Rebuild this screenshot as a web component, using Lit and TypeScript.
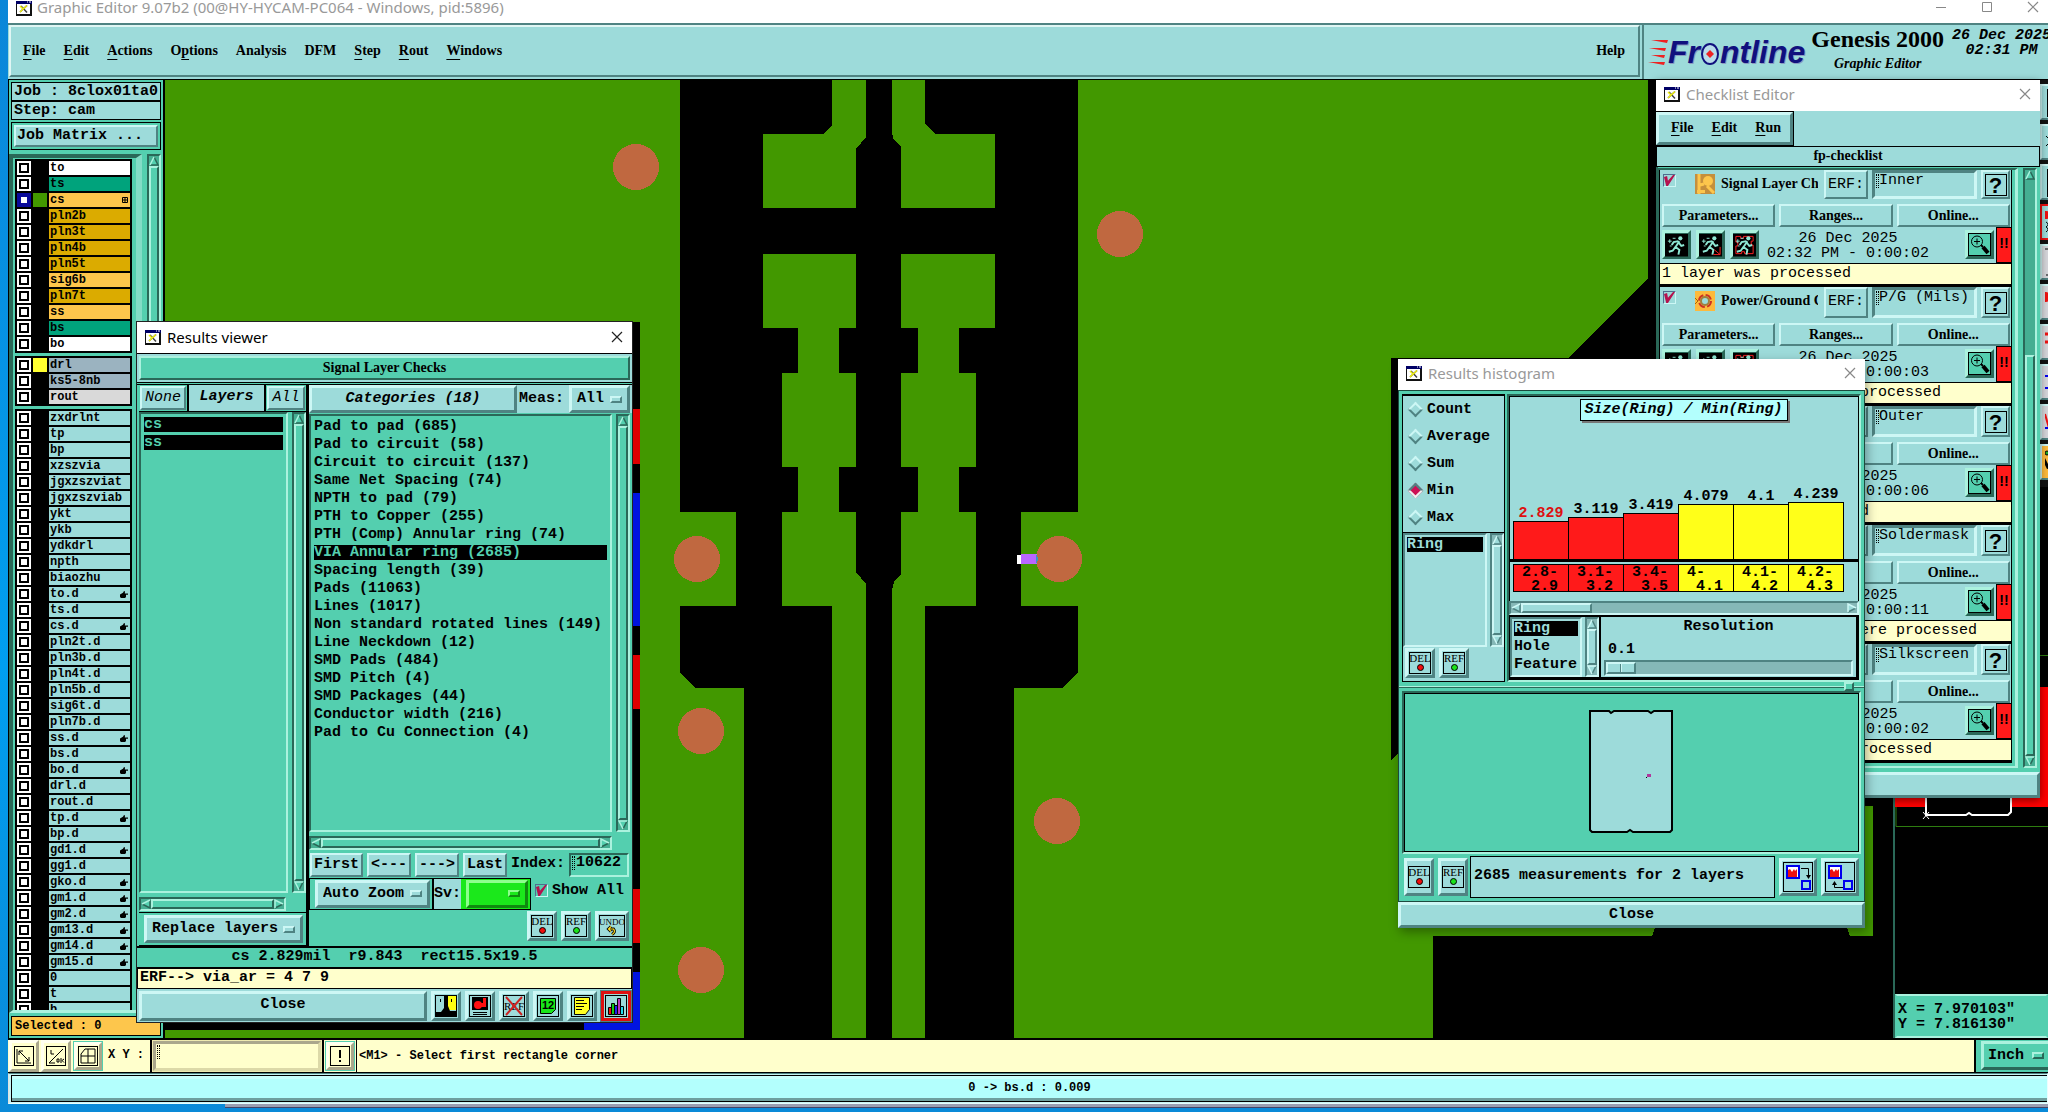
import { LitElement, html, css, svg, nothing } from "lit";
import { customElement } from "lit/decorators.js";
import { classMap } from "lit/directives/class-map.js";
import { styleMap } from "lit/directives/style-map.js";

/* ---------- shared look ---------- */
const base = css`
  *, *::before, *::after { box-sizing: border-box; }
  :host {
    box-sizing: border-box;
    --f: #9ddbda; --l: #cdf7f5; --d: #4f8382; --t: #85b8b7;
    --mono: "Liberation Mono", "Courier New", monospace;
    --serif: "Liberation Serif", "Times New Roman", serif;
    --ui: "Noto Sans", "Open Sans", sans-serif;
    font: bold 15px/18px var(--mono);
    color: #000;
  }
  .cyan { --f: #9ddbda; --l: #cdf7f5; --d: #4f8382; --t: #85b8b7; }
  .teal { --f: #54cfaf; --l: #abf2de; --d: #2a6858; --t: #45ae92; }
  .row { display: flex; }
  .col { display: flex; flex-direction: column; }
  .grow { flex: 1; min-width: 0; min-height: 0; }
  .up { border: 3px solid; border-color: var(--l) var(--d) var(--d) var(--l); background: var(--f); }
  .sunk { border: 3px solid; border-color: var(--d) var(--l) var(--l) var(--d); background: var(--f); }
  .thin { border-width: 2px; }
  button { font: inherit; color: inherit; padding: 0; margin: 0; white-space: nowrap; }
  input, select { font: inherit; color: inherit; margin: 0; padding: 0; border: 0; background: none; appearance: none; min-width: 0; border-radius: 0; outline: 0; }
  ul { list-style: none; margin: 0; padding: 0; }
  svg { display: block; }
  .serif { font: bold 14px/18px var(--serif); }
  .icon { display: flex; align-items: center; justify-content: center; flex: none; }
  .field { display: flex; align-items: flex-start; }
  .field input { flex: 1; width: 0; line-height: 16px; height: 16px; }
  .caret { width: 3px; height: 14px; margin: 1px 1px 0 1px; border-right: 1px dotted #000; border-left: 1px dotted #000; flex: none; }
  .opt { display: flex; align-items: center; }
  .opt select { flex: 1; }
  .notch { width: 12px; height: 7px; flex: none; border: 2px solid; border-color: var(--l) var(--d) var(--d) var(--l); background: var(--f); }
  .tick { width: 13px; height: 13px; flex: none; border: 1px solid; border-color: #4f6f8f #cdf7f5 #cdf7f5 #4f6f8f; background: var(--f); }
  .tick:checked::before { content: ""; display: block; width: 11px; height: 11px; background: #b5124e; clip-path: polygon(0 18%, 28% 10%, 36% 52%, 82% 0, 100% 0, 36% 100%, 20% 100%); }
  .vs, .hs { display: flex; flex: none; border: 2px solid; border-color: var(--d) var(--l) var(--l) var(--d); background: var(--t); }
  .vs { width: 14px; flex-direction: column; align-self: stretch; }
  .hs { height: 14px; }
  .thumb { border: 2px solid; border-color: var(--l) var(--d) var(--d) var(--l); background: var(--f); flex: 1; }
  .title { display: flex; align-items: center; gap: 6px; height: 31px; flex: none; background: #fff; padding: 0 9px 2px 8px; font: 15px/20px var(--ui); color: #999; }
  .title .x { margin-left: auto; border: 0; background: none; width: 12px; height: 12px; }
`;

const appIcon = html`<svg width="16" height="16" viewBox="0 0 16 16" aria-hidden="true">
  <rect x="0" y="1" width="16" height="15" fill="#111"/><rect x="1" y="4" width="13" height="10" fill="#fff"/>
  <rect x="0" y="1" width="16" height="3" fill="#006"/><path d="M11 2h1M13 2h2" stroke="#fff"/>
  <path d="M4 12L11 5.5M5 6l6 6.500" stroke="#444" stroke-width="1.500"/><path d="M4 12L11 5.500M4 6l3 3" stroke="#ee1" stroke-width="1.500"/></svg>`;
const cross = (c = "#888") => html`<svg width="12" height="12" viewBox="0 0 12 12"><path d="M1 1l10 10M11 1L1 11" stroke=${c} stroke-width="1.200" fill="none"/></svg>`;

type Dir = "u" | "d" | "l" | "r";
const TRI: Record<Dir, [string, string]> = {
  u: ["M5 1L1 9", "M5 1L9 9H1"], d: ["M9 1H1L5 9", "M9 1L5 9"],
  l: ["M9 1L1 5", "M1 5L9 9V1"], r: ["M1 9V1L9 5", "M9 5L1 9"],
};
const arrow = (d: Dir) => html`<svg width="10" height="10" viewBox="0 0 10 10" style="flex:none">
  <path d="M${d === "u" ? "5 1L9 9H1z" : d === "d" ? "1 1H9L5 9z" : d === "l" ? "9 1V9L1 5z" : "1 1V9L9 5z"}" fill="var(--f)"/>
  <path d=${TRI[d][1]} fill="none" stroke="var(--d)" stroke-width="1.500"/>
  <path d=${TRI[d][0]} fill="none" stroke="var(--l)" stroke-width="1.500"/></svg>`;
const vscroll = (from = 0, size = 1, rest = 0) => html`<div class="vs">${arrow("u")}
  <div style=${styleMap({ flex: String(from) })}></div><div class="thumb" style=${styleMap({ flex: String(size) })}></div>
  <div style=${styleMap({ flex: String(rest) })}></div>${arrow("d")}</div>`;
const hscroll = (size = 1, rest = 0) => html`<div class="hs">${arrow("l")}
  <div class="thumb" style=${styleMap({ flex: String(size) })}></div>
  <div style=${styleMap({ flex: String(rest) })}></div>${arrow("r")}</div>`;

/* small "DEL" / "REF" style picture: framed caption over a mark */
const tag = (t: string, mark: unknown, w = 22) => html`<svg width=${w} height="22" viewBox="0 0 ${w} 22">
  <rect x="0.500" y="0.500" width=${w - 1} height="21" fill="none" stroke="#000"/>
  <text x=${w / 2} y="9.500" text-anchor="middle" font-family="Liberation Serif, serif" font-weight="400" font-size=${t.length > 3 ? 9 : 11}>${t}</text>${mark}</svg>`;
const dot = (c: string) => svg`<circle cx="11.500" cy="15.500" r="3" fill=${c} stroke="#000"/>`;
const delIcon = tag("DEL", dot("#f00d0d"));
const refIcon = tag("REF", dot("#1be31b"));
const undoIcon = tag("UNDO", svg`<path d="M10 14h4.500q2.500 3-1.500 5.500M12 11.500l-2.500 2.500 2.500 2.500" fill="none" stroke="#000" stroke-width="3"/><path d="M10 14h4.500q2.500 3-1.500 5.500M12 11.500l-2.500 2.500 2.500 2.500" fill="none" stroke="#fd2" stroke-width="1.200"/>`, 26);

/* ---------- layer list ---------- */
interface Layer { n: string; c: string; fill?: string; work?: boolean; pin?: boolean; }
const CY = "#9ddbda";
const L = (names: string, c = CY): Layer[] => names.split(" ").map((s) => ({ n: s.replace("*", ""), c, pin: s.endsWith("*") }));
const GROUPS: Layer[][] = [
  [...L("to", "#fff"), ...L("ts", "#00a37c"), { n: "cs", c: "#fdc64c", fill: "#429800", work: true },
    ...L("pln2b pln3t pln4b pln5t", "#dbab00"), ...L("sig6b", "#fdc64c"), ...L("pln7t", "#dbab00"),
    ...L("ss", "#fdc64c"), ...L("bs", "#00a37c"), ...L("bo", "#fff")],
  [{ n: "drl", c: "#9bb3c0", fill: "#ffff30" }, ...L("ks5-8nb", "#9bb3c0"), ...L("rout", "#d9d9d9")],
  L("zxdrlnt tp bp xzszvia jgxzszviat jgxzszviab ykt ykb ydkdrl npth biaozhu to.d* ts.d cs.d* pln2t.d pln3b.d pln4t.d pln5b.d sig6t.d pln7b.d ss.d* bs.d bo.d* drl.d rout.d tp.d* bp.d gd1.d* gg1.d gko.d* gm1.d* gm2.d* gm13.d* gm14.d* gm15.d* 0 t b"),
];

@customElement("layer-panel")
class LayerPanel extends LitElement {
  static styles = [base, css`
    :host { display: flex; flex-direction: column; width: 157px; flex: none; background: #54cfaf; border: 2px solid #000; border-width: 0 2px 0 1px; padding: 2px; }
    .job { border: 1px solid #000; background: #9ddbda; height: 19px; padding-left: 2px; white-space: nowrap; flex: none; }
    .matrix { border: 1px solid #000; padding: 2px; margin-top: 2px; display: flex; flex: none; }
    .matrix button { flex: 1; text-align: left; padding: 0 0 2px 1px; height: 22px; }
    .mid { margin: 4px 0 3px -2px; flex: 1; min-height: 0; display: flex; gap: 5px; overflow: hidden; }
    .frame { width: 133px; overflow: hidden; border: 6px solid; border-width: 4px 6px 3px 4px; border-color: #2a6858 #83dcc6 #abf2de #2a6858; padding: 1px 4px 0 2px; display: flex; flex-direction: column; gap: 3px; }
    .group { background: #000; padding: 2px; display: flex; flex-direction: column; gap: 2px; width: 117px; flex: none; }
    .layer { display: grid; grid-template-columns: 14px 14px 1fr; gap: 2px; height: 14px; font: bold 12px/14px var(--mono); }
    .box { width: 14px; height: 14px; border: 2px solid #fff; background: #fff; outline: 2px solid #000; outline-offset: -4px; }
    .box:checked { border: 4px solid #0a0a9a; outline: 0; }
    label { display: flex; justify-content: space-between; align-items: center; padding: 0 2px 0 1px; overflow: hidden; white-space: nowrap; }
    .sel { border: 1px solid #000; background: #fdc64c; height: 20px; padding-left: 3px; font-size: 12px; flex: none; }
  `];
  render() {
    return html`
      <div class="job">Job : 8clox01ta0</div>
      <div class="job">Step: cam</div>
      <div class="matrix"><button class="up thin">Job Matrix ...</button></div>
      <div class="mid teal">
        <div class="frame">${GROUPS.map((g, gi) => html`<div class="group">${g.map((l, i) => html`<div class="layer">
          <input class="box" type="checkbox" id="l${gi}-${i}" .checked=${!!l.work}>
          <span style=${styleMap({ background: l.fill ?? "#000" })}></span>
          <label for="l${gi}-${i}" style=${styleMap({ background: l.c })}>${l.n}${l.work
            ? html`<svg width="6" height="6" viewBox="0 0 6 6"><path d="M.5.500h5v5h-5zM3 0v6M0 3h6" fill="none" stroke="#000"/></svg>`
            : l.pin ? html`<svg width="8" height="7" viewBox="0 0 8 7"><path d="M0 3.500L3 1.800 4 0 5 .5 4.800 2.500H8v1.200H6V6L5 7H1L0 6z"/></svg>` : nothing}</label>
        </div>`)}</div>`)}</div>
        ${vscroll()}
      </div>
      <div class="sel">Selected : 0</div>`;
  }
}

/* ---------- board drawing ---------- */
@customElement("board-canvas")
class BoardCanvas extends LitElement {
  static styles = css`
    :host { display: block; background: #000; overflow: hidden; }
    svg { display: block; width: 100%; height: 100%; }
  `;
  render() {
    const pads = [[636, 167], [1120, 234], [697, 559], [1059, 559], [701, 731], [1057, 821], [701, 970]];
    return html`<svg viewBox="165 80 1728 958" preserveAspectRatio="xMinYMin slice" shape-rendering="crispEdges">
      <g fill="#429800">
        <path d="M165 80H680V512H736V606H680V672L695 688H744V1038H165z"/>
        <path d="M1078 80H1648V278L1568 358H1391V760L1398 753H1865V806H1873V936H1850L1847 928H1655L1652 936H1433V1038H1014V688H1062L1078 672V606H1021V512H1078z"/>
        <path d="M832 80H866V137L856 149V208H763V134H823L832 125z"/>
        <path d="M763 254H856V328H839V373H856V467H839V512H856V572L866 584V1038H832V606H782V512H798V467H782V373H798V328H763z"/>
        <path d="M892 80H925V124L935 134H995V208H901V147L893 138 892 131z"/>
        <path d="M901 254H995V328H959V373H976V467H959V512H976V606H925V1038H892V590L894 582 901 574V512H918V467H901V373H918V328H901z"/>
      </g>
      ${pads.map(([x, y]) => svg`<circle cx=${x} cy=${y} r="23" fill="#c06840"/>`)}
      <rect x="1017" y="555" width="4" height="9" fill="#fff"/>
      <rect x="1021" y="554" width="16" height="10" fill="#b966ff"/>
      <path d="M1036 554q4 5 0 10z" fill="#3a94c4"/>
      <path d="M165 322H640V1030H165z" fill="#000"/>
      <path d="M632 409h8v55h-8zM632 655h8v54h-8zM632 889h8v54h-8z" fill="#de0000"/>
      <path d="M632 493h8v133h-8zM632 972h8v58H584v-8h48z" fill="#0014e0"/>
    </svg>`;
  }
}

/* ---------- results viewer ---------- */
const CATS = ["Pad to pad (685)", "Pad to circuit (58)", "Circuit to circuit (137)", "Same Net Spacing (74)", "NPTH to pad (79)",
  "PTH to Copper (255)", "PTH (Comp) Annular ring (74)", "VIA Annular ring (2685)", "Spacing length (39)", "Pads (11063)",
  "Lines (1017)", "Non standard rotated lines (149)", "Line Neckdown (12)", "SMD Pads (484)", "SMD Pitch (4)",
  "SMD Packages (44)", "Conductor width (216)", "Pad to Cu Connection (4)"];
const frame = (body: unknown, fill = "none") => html`<svg width="22" height="22" viewBox="0 0 22 22"><rect x="0.500" y="0.500" width="21" height="21" fill=${fill} stroke="#000"/>${body}</svg>`;
const VIEW_ICONS = [
  frame(svg`<path d="M12 1h9v14h-9z" fill="#ff1"/><path d="M9 1h4v10l2 5h6v5H1v-4h5l3-4zM5 4h1v3H5zM16 4h1v3h-1z"/>`, "#9ddbda"),
  frame(svg`<path d="M3 2h16v13H3z"/><circle cx="9" cy="10" r="4" fill="#f11"/><path d="M14 3h3v9h-5V8h2z" fill="#f11"/><path d="M4 17.500h14M4 19.500h14" stroke="#000"/>`),
  frame(svg`<text x="11" y="15" text-anchor="middle" font-family="Liberation Serif, serif" font-size="11" font-weight="400">REF</text><path d="M3 2l16 18M19 2L3 20" stroke="#c22" stroke-width="2"/>`),
  frame(svg`<path d="M3.500 3.500h15v11l-4 4h-11z" fill="#19e619" stroke="#000"/><text x="11" y="14" text-anchor="middle" font-family="Liberation Sans, sans-serif" font-size="11" font-weight="700">12</text>`),
  frame(svg`<path d="M3.500 2.500h15v12l-4 5h-11z" fill="#ff2" stroke="#000"/><path d="M5 5.500h8M5 8.500h11M5 11.500h8M5 14.500h6" stroke="#000"/>`),
  frame(svg`<path d="M3.500 12.500h3v7h-3z" fill="#e11" stroke="#000"/><path d="M6.500 8.500h3v11h-3z" fill="#1c1" stroke="#000"/><path d="M9.500 10.500h3v9h-3z" fill="#22e" stroke="#000"/><path d="M12.500 3.500h3v16h-3z" fill="#b3b" stroke="#000"/><path d="M15.500 11.500h3v8h-3z" fill="#2de" stroke="#000"/>`),
];

@customElement("results-viewer")
class ResultsViewer extends LitElement {
  static styles = [base, css`
    :host { display: flex; flex-direction: column; width: 495px; background: #54cfaf; outline: 1px solid #222; }
    .title { color: #000; }
    .head { border: 2px solid #9ddbda; margin-top: 1px; height: 28px; flex: none; outline: 1px solid #000; }
    .head div { height: 24px; line-height: 19px; text-align: center; }
    .panes { display: flex; margin-top: 2px; border-top: 1px solid #000; height: 562px; flex: none; }
    .left { width: 172px; border-right: 3px solid #000; padding-left: 2px; }
    .right { flex: 1; min-width: 0; }
    .lhead { height: 27px; border-bottom: 1px solid #000; flex: none; font-style: italic; }
    .lhead button { width: 46px; margin: 1px; font-weight: 400; font-style: italic; }
    .lhead button:last-child { width: 38px; }
    .lhead span { flex: 1; text-align: center; background: #9ddbda; border: 2px solid #000; border-width: 0 2px; line-height: 24px; }
    .list { padding: 3px; border-width: 2px; flex: 1; min-width: 0; }
    .list li { height: 15px; line-height: 15px; margin-bottom: 3px; white-space: nowrap; }
    .list .on { background: #000; color: #54cfaf; }
    .lists { display: flex; gap: 4px; }
    .right .lists { padding-right: 2px; margin-top: 1px; }
    .hs { margin: 4px 20px 3px 0; }
    .left .hs { margin-bottom: 1px; }
    .rep { border: 1px solid #000; border-width: 1px 0; padding: 2px 3px 2px 5px; height: 34px; flex: none; }
    .opt { padding: 0 5px; height: 28px; }
    .cats { background: #9ddbda; padding-right: 2px; height: 28px; flex: none; }
    .cats button { width: 208px; font-style: italic; flex: none; }
    .cats label { padding: 0 5px 0 2px; line-height: 28px; }
    .nav { gap: 4px; height: 24px; padding: 0 3px 0 1px; align-items: stretch; flex: none; }
    .nav button { padding: 0 2px; width: 44px; flex: none; }
    .nav button:first-child { width: 53px; }
    .nav label { line-height: 22px; flex: none; }
    .zoom { height: 33px; align-items: center; flex: none; }
    .zoom > div { height: 32px; border: 1px solid #000; background: #9ddbda; display: flex; align-items: center; }
    .zoom .az { width: 124px; padding: 0 2px 0 5px; background: #54cfaf; }
    .zoom .sv { width: 98px; }
    .zoom .gr { --f: #1be81b; --l: #8dff8d; --d: #108a10; background: #1be81b; flex: 1; height: 30px; padding: 1px 2px 1px 5px; }
    .gr .opt { justify-content: flex-end; }
    .zoom .tick { margin: 0 4px 6px 4px; }
    .zoom > label { margin-bottom: 6px; }
    .tools { justify-content: flex-end; gap: 4px; padding: 1px 3px 0 0; height: 36px; flex: none; }
    .tools button { width: 30px; height: 30px; }
    .tools button:last-child { width: 34px; }
    .stat { height: 21px; border-top: 2px solid #000; text-align: center; white-space: pre; flex: none; }
    .erf { height: 22px; border: 1px solid #000; border-top-width: 2px; background: #ffffcc; padding-left: 2px; flex: none; }
    .foot { background: #9ddbda; flex: 1; gap: 4px; padding: 2px 1px 2px 2px; }
    .foot button { width: 30px; }
    .foot button:first-child { flex: 1; line-height: 22px; padding-bottom: 2px; }
    .foot button:last-child { border-color: #de1010; background: #9ddbda; outline: 1px solid #4f8382; }
  `];
  render() {
    return html`
      <div class="title">${appIcon}<span>Results viewer</span><button class="x" aria-label="Close window">${cross("#222")}</button></div>
      <div class="head teal serif"><div class="up thin">Signal Layer Checks</div></div>
      <div class="panes">
        <div class="left col teal">
          <div class="row lhead"><button class="up cyan thin">None</button><span>Layers</span><button class="up cyan thin">All</button></div>
          <div class="lists grow"><ul class="list sunk"><li class="on">cs</li><li class="on">ss</li></ul>${vscroll()}</div>
          ${hscroll()}
          <div class="rep"><div class="opt up cyan"><select aria-label="Layer mode"><option>Replace layers</option></select><i class="notch"></i></div></div>
        </div>
        <div class="right col teal">
          <div class="row cats cyan"><button class="up">Categories (18)</button><label for="meas">Meas:</label>
            <div class="opt up grow"><select id="meas"><option>All</option></select><i class="notch"></i></div></div>
          <div class="lists grow"><ul class="list sunk">${CATS.map((c, i) => html`<li class=${classMap({ on: i === 7 })}>${c}</li>`)}</ul>${vscroll()}</div>
          ${hscroll()}
          <div class="row nav"><button class="up cyan thin">First</button><button class="up cyan thin">&lt;---</button><button class="up cyan thin">---&gt;</button><button class="up cyan thin">Last</button>
            <label for="idx">Index:</label><div class="field sunk thin grow"><i class="caret"></i><input id="idx" value="10622"></div></div>
          <div class="row zoom">
            <div class="az"><div class="opt up cyan grow"><select aria-label="Zoom mode"><option>Auto Zoom</option></select><i class="notch"></i></div></div>
            <div class="sv"><label for="sv">Sv:</label><div class="gr"><div class="opt up"><select id="sv"><option></option></select><i class="notch"></i></div></div></div>
            <input class="tick" type="checkbox" id="all" checked><label for="all">Show All</label>
          </div>
          <div class="row tools cyan"><button class="up icon" aria-label="Delete">${delIcon}</button><button class="up icon" aria-label="Refresh">${refIcon}</button><button class="up icon" aria-label="Undo">${undoIcon}</button></div>
        </div>
      </div>
      <div class="stat">cs 2.829mil  r9.843  rect15.5x19.5</div>
      <div class="erf">ERF--&gt; via_ar = 4 7 9</div>
      <div class="row foot"><button class="up">Close</button>${VIEW_ICONS.map((i, n) => html`<button class="up icon" aria-label="Tool ${n + 1}">${i}</button>`)}</div>`;
  }
}

/* ---------- histogram ---------- */
const BARS: [string, string, string, number, string][] = [
  ["2.829", "2.8-", "2.9", 38, "#ff1a1a"], ["3.119", "3.1-", "3.2", 42, "#ff1a1a"], ["3.419", "3.4-", "3.5", 46, "#ff1a1a"],
  ["4.079", "4-", "4.1", 55, "#ffff19"], ["4.1", "4.1-", "4.2", 55, "#ffff19"], ["4.239", "4.2-", "4.3", 57, "#ffff19"]];

@customElement("results-histogram")
class ResultsHistogram extends LitElement {
  static styles = [base, css`
    :host { display: flex; flex-direction: column; width: 467px; background: #9ddbda; box-shadow: 2px 4px 10px rgba(0,0,0,.35); }
    .title { padding-bottom: 4px; }
    .body { background: #54cfaf; border: 1px solid #1d4a3e; padding: 3px; display: flex; flex-direction: column; height: 512px; flex: none; }
    .top { gap: 2px; height: 288px; flex: none; }
    .side { width: 103px; border: 1px solid #000; border-top-width: 2px; background: #9ddbda; flex: none; }
    .radios { height: 137px; border-bottom: 1px solid #000; padding: 0 0 2px 7px; flex: none; }
    .radios label { display: flex; align-items: center; gap: 6px; height: 27px; }
    .radios input { width: 11px; height: 11px; transform: rotate(45deg); border: 2px solid; border-color: #cdf7f5 #4f8382 #4f8382 #cdf7f5; }
    .radios input:checked { background: #cc0f55; border-color: #4f8382 #eee #eee #4f8382; }
    .list { flex: 1; padding: 2px; min-width: 0; border-width: 2px; overflow: hidden; }
    .list li { height: 15px; line-height: 15px; margin-bottom: 3px; white-space: nowrap; }
    .on { background: #000; color: #9ddbda; }
    .lists { height: 114px; gap: 3px; flex: none; }
    .btns { gap: 4px; padding: 1px 2px; }
    .btns button { width: 30px; height: 30px; }
    .main { border: 2px solid; border-color: #2a6858 #abf2de #abf2de #2a6858; background: #9ddbda; }
    .chart { display: flex; flex-direction: column; align-items: center; height: 205px; border: 1px solid #000; border-bottom: 0; flex: none; }
    .cap { margin-top: 2px; padding: 1px 4px 0 3px; height: 22px; border: 1px solid #000; background: #b3fffd; box-shadow: 2px 2px 0 #777; font-style: italic; }
    .bars { flex: 1; width: 100%; display: flex; align-items: flex-end; padding: 0 15px 0 3px; border-bottom: 3px solid #000; }
    .bar { flex: 1; text-align: center; margin-right: -1px; }
    .bar span { display: block; line-height: 15px; }
    .bar div { border: 1px solid #000; border-bottom: 0; }
    .bar:first-child span { color: #d11; }
    .bins { width: 100%; display: flex; padding: 2px 15px 9px 3px; height: 39px; flex: none; }
    .bin { flex: 1; border: 1px solid #000; margin-right: -1px; line-height: 14px; overflow: hidden; padding: 1px 0 0 8px; white-space: pre; }
    .low { flex: 1; border: 1px solid #000; border-width: 2px 3px 3px 1px; }
    .pick { width: 91px; gap: 3px; border-right: 2px solid #000; flex: none; }
    .res { text-align: center; padding: 1px 3px; }
    .res output { text-align: left; padding-left: 4px; margin-top: 5px; }
    input[type=range] { height: 16px; margin-top: auto; width: 100%; border: 2px solid; border-color: #4f8382 #cdf7f5 #cdf7f5 #4f8382; background: #85b8b7; }
    input[type=range]::-webkit-slider-thumb { appearance: none; width: 30px; height: 12px; border: 2px solid; border-color: #cdf7f5 #4f8382 #4f8382 #cdf7f5; background: linear-gradient(90deg, #9ddbda 12px, #4f8382 12px 13px, #cdf7f5 13px 14px, #9ddbda 14px); }
    .sash { height: 9px; display: flex; align-items: center; justify-content: flex-end; margin: 0 -3px; padding-right: 10px; background: linear-gradient(#54cfaf 4px, #abf2de 4px 5px, #2a6858 5px 6px, #54cfaf 6px); flex: none; }
    .sash i { width: 10px; height: 9px; }
    .map { flex: 1; padding: 0; }
    .map > div { border: 1px solid #000; height: 100%; display: flex; justify-content: center; align-items: center; padding: 0 2px 2px 0; }
    .info { gap: 4px; height: 44px; align-items: center; padding: 2px 2px 0 2px; flex: none; }
    .info button { width: 30px; height: 38px; }
    .info button.big { width: 38px; }
    .info p { flex: 1; margin: 0 0 0 -2px; height: 42px; border: 1px solid #000; background: #9ddbda; line-height: 38px; padding-left: 3px; }
    .close { height: 26px; }
  `];
  private swap(out: boolean) {
    return html`<svg width="30" height="30" viewBox="0 0 30 30"><rect x=".5" y=".5" width="29" height="29" fill="none" stroke="#000"/>
      <rect x="4" y="4" width="12" height="12" fill="#fff" stroke="#00e" stroke-width="2"/><path d="M5 8l2-1 2 3 2-3 1 2 2-2v8H5z" fill="#e11"/>
      <rect x="19" y="19" width="8" height="8" fill="none" stroke="#00e" stroke-width="2"/>
      ${out ? svg`<path d="M18 6.500h7.500v8" fill="none" stroke="#000"/><path d="M23 13h5l-2.500 4z"/>`
        : svg`<path d="M18 25.500H9.500V22" fill="none" stroke="#000"/><path d="M7 23h5l-2.500-4z"/>`}</svg>`;
  }
  render() {
    return html`
      <div class="title">${appIcon}<span>Results histogram</span><button class="x" aria-label="Close window">${cross()}</button></div>
      <div class="body">
        <div class="row top">
          <div class="side col">
            <div class="radios">${["Count", "Average", "Sum", "Min", "Max"].map((r) => html`<label><input type="radio" name="fn" .checked=${r === "Min"}>${r}</label>`)}</div>
            <div class="row lists"><ul class="list sunk"><li class="on">Ring</li></ul>${vscroll()}</div>
            <div class="row btns"><button class="up icon" aria-label="Delete">${delIcon}</button><button class="up icon" aria-label="Refresh">${refIcon}</button></div>
          </div>
          <div class="main col grow">
            <div class="chart"><div class="cap">Size(Ring) / Min(Ring)</div>
              <div class="bars">${BARS.map((b) => html`<div class="bar"><span>${b[0]}</span><div style=${styleMap({ height: b[3] + "px", background: b[4] })}></div></div>`)}</div>
              <div class="bins">${BARS.map((b) => html`<div class="bin" style=${styleMap({ background: b[4] })}>${b[1] + "\n " + b[2]}</div>`)}</div>
            </div>
            ${hscroll(68, 258)}
            <div class="row low grow">
              <div class="row pick"><ul class="list sunk"><li class="on">Ring</li><li>Hole</li><li>Feature</li></ul>${vscroll()}</div>
              <div class="col res grow"><label for="res">Resolution</label><output>0.1</output><input id="res" type="range" value="0"></div>
            </div>
          </div>
        </div>
        <div class="sash teal"><i class="up thin"></i></div>
        <div class="map sunk teal thin"><div>
          <svg width="84" height="124" viewBox="0 0 84 124"><path d="M1 1H20L22 3 25 1H59L62 3 65 1H83V120L81 122H44L41 120 38 122H3L1 120z" fill="#9ddbda" stroke="#000" stroke-width="2"/><path d="M58 64h4v3h-4z" fill="#b0369c"/><path d="M57 67h1v1h-1z"/></svg></div></div>
        <div class="row info"><button class="up icon" aria-label="Delete">${delIcon}</button><button class="up icon" aria-label="Refresh">${refIcon}</button>
          <p>2685 measurements for 2 layers</p><button class="up icon big" aria-label="Export">${this.swap(true)}</button><button class="up icon big" aria-label="Import">${this.swap(false)}</button></div>
      </div>
      <button class="up close">Close</button>`;
  }
}

/* ---------- checklist ---------- */
const CHECKS = [
  ["Signal Layer Checks", "Inner", "02:32 PM - 0:00:02", "1 layer was processed"],
  ["Power/Ground Checks", "P/G (Mils)", "02:32 PM - 0:00:03", "5 power/ground layers processed"],
  ["Signal Layer Checks", "Outer", "02:32 PM - 0:00:06", "2 layers were processed"],
  ["Solder Mask Checks", "Soldermask", "02:32 PM - 0:00:11", "2 solder mask layers were processed"],
  ["Silk Screen Checks", "Silkscreen", "02:32 PM - 0:00:02", "2 silk screen layers processed"]];
const layerIcon = html`<svg width="20" height="20" viewBox="0 0 20 20"><rect width="20" height="20" fill="#c58f3c"/><path d="M4 0v20M2 17.500h8M12 12l7 7M9 10l-4 1" stroke="#fdc64c" stroke-width="3" fill="none"/><circle cx="13" cy="7" r="5" fill="#fdc64c"/></svg>`;
const planeIcon = html`<svg width="20" height="20" viewBox="0 0 20 20"><rect width="20" height="20" fill="#fdb93c"/><path d="M0 7l3 3-3 3" fill="none" stroke="#a60"/><circle cx="10" cy="10" r="6" fill="none" stroke="#c32" stroke-width="2" stroke-dasharray="7 2.400"/><circle cx="10" cy="10" r="4" fill="#9ddbda" stroke="#a08040" stroke-width="2"/></svg>`;
const runner = (kind: number) => html`<svg width="24" height="24" viewBox="0 0 24 24"><rect width="24" height="24" fill="#000"/>
  ${kind === 2 ? svg`<path d="M3 3h5v2h3V3h10v5h-2v4h2v9H12v-2H9v2H3v-8h2V9H3z" fill="none" stroke="#f22"/>` : nothing}
  <circle cx="16" cy="5" r="2.200" fill="#8fe8d4"/><path d="M15 8l-4 6 4 3-1 5M11 14l-3 4-4 1M14 8l-5 1-2 3M14 9l3 4 3-1" fill="none" stroke="#8fe8d4" stroke-width="2"/>
  <path d="M3 8h4M5 6v4M8 5h3M5 13h2" stroke="#8fe8d4"/>
  ${kind === 1 ? svg`<path d="M16 17l6 5M22 14v8h-7" fill="none" stroke="#f22"/>` : nothing}</svg>`;
const lens = html`<svg width="23" height="23" viewBox="0 0 23 23"><rect x=".5" y=".5" width="22" height="22" fill="#54cfaf" stroke="#000"/><circle cx="9" cy="8.500" r="5.500" fill="none" stroke="#000"/><path d="M6 8.500h6M9 5.500v6" stroke="#000"/><path d="M13 12l2 2" stroke="#000" stroke-width="2"/><path d="M15 14l5 6" stroke="#000" stroke-width="4"/></svg>`;

@customElement("checklist-editor")
class ChecklistEditor extends LitElement {
  static styles = [base, css`
    :host { display: flex; flex-direction: column; width: 384px; height: 718px; background: #9ddbda; box-shadow: 0 2px 8px rgba(0,0,0,.5); }
    .title { padding-bottom: 4px; }
    .menu { width: 138px; height: 35px; border: 1px solid #000; border-width: 1px 1px 1px 0; flex: none; }
    .menu div { display: flex; gap: 18px; padding: 4px 0 0 12px; height: 33px; }
    .menu button { border: 0; background: none; height: 18px; }
    .menu button::first-letter { text-decoration: underline; text-underline-offset: 3px; }
    .name { border: 1px solid #000; height: 21px; text-align: center; flex: none; }
    .wrap { background: #54cfaf; border-left: 2px solid #2a6858; padding: 1px 3px 4px 0; gap: 5px; flex: 1; min-height: 0; }
    .items { width: 363px; border: 2px solid; border-color: #2a6858 #abf2de #abf2de #2a6858; border-width: 2px 3px 2px 1px; overflow: hidden; padding-right: 3px; }
    .item { border: 1px solid #000; border-width: 0 1px 3px 1px; background: #9ddbda; height: 119px; }
    .item:first-child { height: 117px; }
    .item:first-child .a { height: 29px; }
    .a { height: 31px; padding: 0 1px 0 3px; gap: 4px; }
    .a .tick { margin: 4px 15px 0 0; }
    .a > svg { margin-top: 4px; flex: none; }
    .a h3 { margin: 4px 2px 0 2px; width: 97px; overflow: hidden; white-space: nowrap; font: bold 14px/20px var(--serif); flex: none; }
    .erf { width: 44px; padding-left: 2px; font-weight: 400; line-height: 26px; flex: none; }
    .field { flex: 1; font-weight: 400; }
    .field .caret { margin-left: 1px; margin-right: 0; }
    .q { width: 29px; }
    .q span { width: 22px; height: 22px; border: 1px solid #000; font: bold 22px/21px "Liberation Sans", sans-serif; }
    .b { gap: 4px; padding: 5px 1px 0 2px; }
    .b button { flex: 1; height: 23px; font: bold 14px/18px var(--serif); }
    .c { padding: 3px 0 0 2px; height: 36px; gap: 5px; }
    .c button { width: 29px; height: 29px; }
    .c p { margin: 0; flex: 1; text-align: center; font-weight: 400; line-height: 15px; padding: 1px 28px 0 0; white-space: nowrap; }
    .c b { width: 16px; margin: -3px -1px 0 -3px; border: 1px solid #000; background: #ff1a1a; font: bold 14px/30px "Liberation Sans", sans-serif; text-align: center; }
    .msg { border-top: 1px solid #000; background: #ffffcc; font-weight: 400; padding-left: 2px; line-height: 20px; }
    .close { height: 26px; flex: none; }
  `];
  render() {
    return html`
      <div class="title">${appIcon}<span>Checklist Editor</span><button class="x" aria-label="Close window">${cross()}</button></div>
      <div class="menu serif"><div class="up">${["File", "Edit", "Run"].map((m) => html`<button>${m}</button>`)}</div></div>
      <div class="name serif">fp-checklist</div>
      <div class="row wrap teal">
        <div class="items cyan">${CHECKS.map(([n, erf, time, msg], i) => html`<section class="item col">
          <div class="row a"><input class="tick" type="checkbox" checked aria-label="${n}">${i % 2 ? planeIcon : layerIcon}<h3>${n}</h3>
            <label class="erf up thin" for="e${i}">ERF:</label><div class="field sunk"><i class="caret"></i><input id="e${i}" .value=${erf}></div>
            <button class="q up icon thin" aria-label="Help"><span>?</span></button></div>
          <div class="row b"><button class="up thin">Parameters...</button><button class="up thin">Ranges...</button><button class="up thin">Online...</button></div>
          <div class="row c"><button class="up icon teal" aria-label="Run">${runner(0)}</button><button class="up icon teal" aria-label="Run on changed">${runner(1)}</button><button class="up icon teal" aria-label="Run on profile">${runner(2)}</button>
            <p>26 Dec 2025<br>${time}</p><button class="up icon teal" aria-label="Show results">${lens}</button><b>!!</b></div>
          <div class="msg grow">${msg}</div>
        </section>`)}</div>
        ${vscroll(180, 408)}
      </div>
      <button class="up close" aria-label="Close"></button>`;
  }
}

/* ---------- main window ---------- */
const MENUS: [string, string, string][] = [["", "F", "ile"], ["", "E", "dit"], ["", "A", "ctions"], ["O", "p", "tions"], ["Analysis", "", ""], ["DFM", "", ""], ["", "S", "tep"], ["", "R", "out"], ["", "W", "indows"]];
const PICTS = [
  svg`<path d="M3 4h14v26H3z" fill="none" stroke="#000" stroke-width="2"/>`, svg`<path d="M1 10l5 5-5 5M5 20h8v8" fill="none" stroke="#000"/>`,
  svg`<path d="M3 4h14v26H3z" fill="none" stroke="#000" stroke-width="2"/>`, svg`<circle cx="1" cy="9" r="4" fill="#e11"/><path d="M1 16q4 2 0 5 4 2 0 5" fill="none" stroke="#000"/>`,
  svg`<path d="M0 3h4v26H0" fill="none" stroke="#000" stroke-dasharray="3 2"/>`, svg`<circle cx="1" cy="11" r="5" fill="#e11"/>`,
  svg`<path d="M0 8h5M0 16h5" stroke="#e11" stroke-width="3"/>`, svg`<path d="M0 10h4v12H0" fill="none" stroke="#00e" stroke-width="2"/>`,
  svg`<path d="M0 8l4 14" stroke="#e11" stroke-width="2"/><path d="M0 22h6" stroke="#00e" stroke-width="2"/>`, svg`<circle cx="2" cy="7" r="2" fill="#2a2" stroke="#000"/><path d="M0 12l5 10-3 1-2-4z"/>`,
];

@customElement("app-root")
class AppRoot extends LitElement {
  static styles = [base, css`
    :host { display: block; position: relative; height: 100vh; overflow: hidden; background: linear-gradient(#0b86d8, #009ff0 60%, #0a8ad8); padding: 0 0 8px 8px; }
    .win { display: flex; flex-direction: column; height: 100%; background: #54cfaf; }
    .bar { display: flex; align-items: flex-start; gap: 4px; height: 23px; background: #fff; font: 15px/14px var(--ui); color: #999; padding-left: 8px; flex: none; }
    .bar span { margin-left: 1px; }
    .bar .ctl { margin-left: auto; display: flex; gap: 34px; padding: 1px 9px 0 0; }
    .bar .ctl button { border: 0; background: none; }
    .top { height: 57px; background: #9ddbda; border-top: 2px solid #4f8382; border-bottom: 1px solid #000; flex: none; }
    .menus { flex: 1; border: 2px solid; border-color: #e0f6f4 #4f8382 #4f8382 #e0f6f4; margin: 0 2px 2px 1px; padding: 14px 13px 0 12px; gap: 18px; }
    .menus button { border: 0; background: none; height: 20px; line-height: 18px; }
    .menus u { text-underline-offset: 4px; }
    .menus button:last-child { margin-left: auto; }
    .brand { width: 406px; border-left: 2px solid #4f8382; padding-left: 4px; display: flex; flex: none; overflow: hidden; }
    .logo { display: flex; align-items: center; flex: none; color: #10107e; font: italic bold 32px/46px "Liberation Sans", sans-serif; text-shadow: 1px 1px 0 #8a9ac0; }
    .logo svg { flex: none; }
    .prod { text-align: center; font: bold 24px/28px var(--serif); margin-left: 6px; white-space: nowrap; flex: none; }
    .prod i { display: block; font-size: 14px; line-height: 22px; }
    .when { font-style: italic; text-align: center; line-height: 15px; padding: 3px 0 0 8px; white-space: nowrap; flex: none; }
    .mid { flex: 1; min-height: 0; display: flex; }
    board-canvas { flex: 1; min-width: 0; }
    .over { width: 155px; background: #000; border-left: 2px solid #2a6858; flex: none; display: flex; flex-direction: column; }
    .tools { height: 407px; display: flex; flex-direction: column; gap: 4px; align-items: flex-end; padding-top: 4px; background: #111; flex: none; overflow: hidden; }
    .tools i { width: 24px; height: 36px; flex: none; margin-right: -16px; padding: 0 0 0 3px; }
    .tools i.red { border-color: #e11; } .tools i.grey { background: #d5d5da; } .tools i.gold { background: #fdb93c; }
    .ov { flex: 1; min-height: 0; }
    .ov svg { width: 100%; height: 100%; }
    .xy { height: 44px; border: 2px solid; border-color: #abf2de #54cfaf #abf2de #54cfaf; background: #54cfaf; line-height: 15px; padding: 6px 0 0 1px; white-space: pre; flex: none; }
    .cmd { height: 35px; border: 2px solid #000; border-width: 2px 0 1px; background: #ffffcc; flex: none; font-size: 12px; align-items: stretch; }
    .cmd button { width: 30px; margin: 0 1px; border: 3px solid; border-color: #fffff0 #aaa78c #aaa78c #fffff0; background: #ffffcc; }
    .cmd .lit { outline: 1px solid #54cfaf; margin: 2px; width: 28px; }
    .cmd label { line-height: 31px; padding: 0 6px 0 4px; white-space: pre; }
    .cmd .edge { border: 1px solid #000; border-width: 0 2px; padding: 1px; background: #eee9b0; width: 174px; }
    .cmd .edge .field { height: 100%; border: 3px solid; border-color: #aaa78c #dcd9a8 #dcd9a8 #aaa78c; background: #ffffcc; }
    .cmd p { margin: 0; flex: 1; line-height: 32px; padding-left: 2px; border: 2px solid #000; border-width: 0 2px 0 1px; }
    .cmd .opt { font-size: 15px; width: 90px; height: 29px; margin: 1px 0 0 5px; padding: 0 4px; flex: none; gap: 6px; }
    .unit { background: #54cfaf; width: 72px; display: flex; overflow: hidden; }
    .cmd .unit select { flex: none; width: 38px; font: bold 15px/18px var(--mono); }
    .stat { height: 31px; border: 1px solid; border-color: #4f8382 #e8ffff #e8ffff #e0e0e0; background: #c8f4f3; padding: 1px 0 1px 2px; flex: none; display: flex; }
    .stat div { flex: 1; border: 1px solid #000; border-right: 0; box-shadow: inset 0 3px #c9fffd, inset 0 -3px #6e9f9e; background: #b3fffd; text-align: center; font-size: 12px; line-height: 24px; }
    .strip { height: 4px; margin-left: 217px; background: #9a9fb2; border-bottom: 1px solid #446; }
    .pop { position: absolute; }
    results-viewer { left: 137px; top: 322px; height: 700px; }
    results-histogram { left: 1398px; top: 359px; }
    checklist-editor { left: 1656px; top: 80px; }
  `];
  render() {
    const sq = (body: unknown) => html`<svg width="20" height="20" viewBox="0 0 20 20"><rect x=".5" y=".5" width="19" height="19" fill="none" stroke="#000"/>${body}</svg>`;
    return html`
      <div class="win">
        <div class="bar">${appIcon}<span>Graphic Editor 9.07b2 (00@HY-HYCAM-PC064 - Windows, pid:5896)</span>
          <div class="ctl"><button aria-label="Minimise"><svg width="12" height="12"><path d="M1 6.500h10" stroke="#888"/></svg></button>
          <button aria-label="Maximise"><svg width="12" height="12"><path d="M1.500 1.500h9v9h-9z" fill="none" stroke="#888"/></svg></button>
          <button aria-label="Close">${cross()}</button></div></div>
        <div class="row top">
          <nav class="row menus serif">${MENUS.map(([a, u, b]) => html`<button>${a}<u>${u}</u>${b}</button>`)}<button>Help</button></nav>
          <div class="brand">
            <div class="logo"><svg width="20" height="32" viewBox="0 0 20 32"><path d="M3 4h17l-1 3zM1 12h17l-1 3zM3 19h14l-1 3zM0 26h17l-1 3z" fill="#e22"/></svg><span>Fr</span><svg width="20" height="26" viewBox="0 0 20 26"><ellipse cx="10" cy="15" rx="8" ry="10" fill="#b9dcea" stroke="#10107e" stroke-width="2"/><path d="M10 11l4 4-4 4-4-4z" fill="#e22"/></svg><span>ntline</span></div>
            <div class="prod">Genesis 2000<i>Graphic Editor</i></div>
            <div class="when">26 Dec 2025<br>02:31 PM</div>
          </div>
        </div>
        <div class="mid">
          <layer-panel></layer-panel>
          <board-canvas></board-canvas>
          <div class="over">
            <div class="tools">${["", "", "", "red", "grey", "grey", "grey", "grey", "grey", "gold"].map((c, i) => html`<i class="up thin ${c}"><svg width="18" height="32" viewBox="0 0 18 32">${PICTS[i]}</svg></i>`)}</div>
            <div class="ov"><svg viewBox="0 487 153 508" preserveAspectRatio="xMinYMin slice"><path d="M0 655.500h153M1 687V826.500h152" fill="none" stroke="#2e7d10"/><rect y="687" width="153" height="120" fill="#f00"/><path d="M32 780h84v27h-84z"/><path d="M31 780V815H71L74 813 77 815H113L116 812V780" fill="none" stroke="#fff" stroke-width="2"/><path d="M28 812l6 7M34 812l-6 7" stroke="#fff"/></svg></div>
            <div class="xy">X = 7.970103"
Y = 7.816130"</div>
          </div>
        </div>
        <div class="row cmd">
          <button class="icon" aria-label="Diagonal">${sq(svg`<path d="M3 3v14h14M5 5l10 10M5 9V5h4M15 11v4h-4" fill="none" stroke="#000"/>`)}</button>
          <button class="icon" aria-label="Angle">${sq(svg`<path d="M3 17L17 3M3 17h6M5 4v4h3M11 13h2v3h-2zM15 12v5M18 13l-2 1.500 2 2" fill="none" stroke="#000"/>`)}</button>
          <button class="icon lit" aria-label="Grid">${sq(svg`<path d="M3 8l4-5h10v14H3zM10 3v14M3 10h14" fill="none" stroke="#000"/>`)}</button>
          <label for="cmd">X Y :</label>
          <div class="edge"><div class="field"><i class="caret"></i><input id="cmd" value=""></div></div>
          <button class="icon lit" aria-label="Alert">${sq(svg`<path d="M10 4v8M10 14v2" stroke="#000" stroke-width="2"/>`)}</button>
          <p>&lt;M1&gt; - Select first rectangle corner</p>
          <div class="unit teal"><div class="opt up"><select aria-label="Units"><option>Inch</option></select><i class="notch"></i></div></div>
        </div>
        <div class="stat"><div>0 -&gt; bs.d : 0.009</div></div>
      </div>
      <div class="strip"></div>
      <checklist-editor class="pop"></checklist-editor>
      <results-viewer class="pop"></results-viewer>
      <results-histogram class="pop"></results-histogram>`;
  }
}
